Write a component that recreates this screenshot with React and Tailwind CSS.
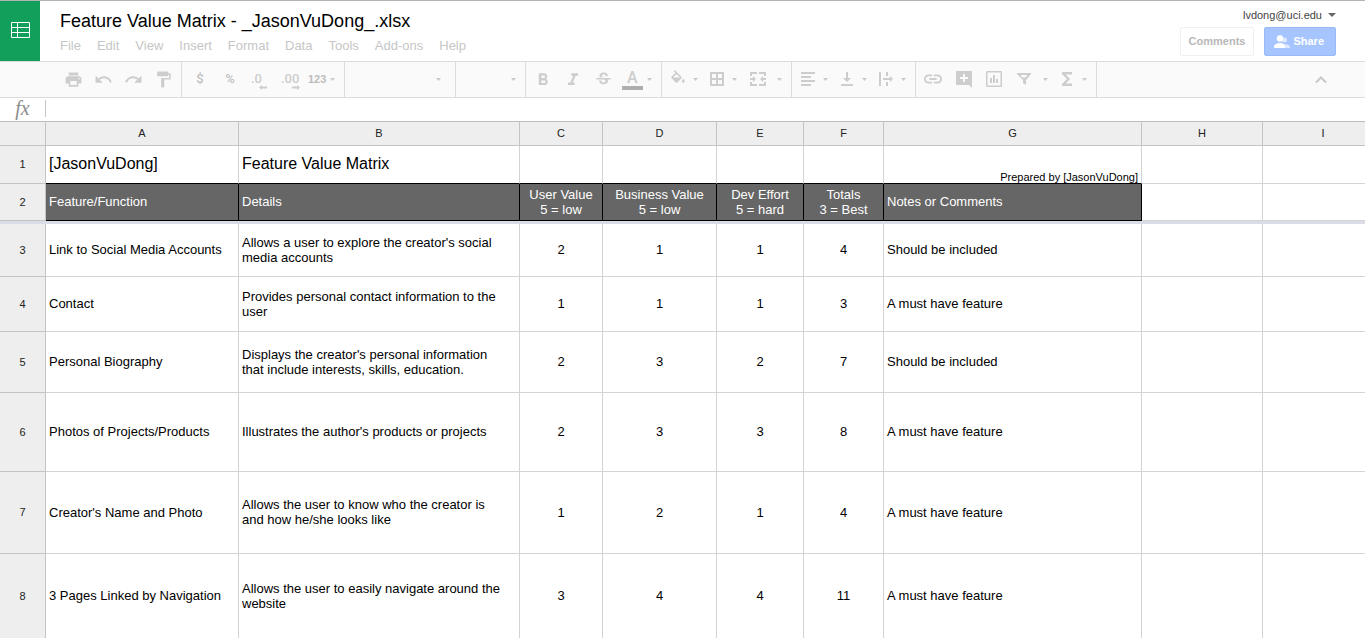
import React from "react";
import {
  MdPrint,
  MdUndo,
  MdRedo,
  MdFormatPaint,
  MdFormatBold,
  MdFormatItalic,
  MdStrikethroughS,
} from "react-icons/md";

const MENUS = ["File", "Edit", "View", "Insert", "Format", "Data", "Tools", "Add-ons", "Help"];

const COLUMNS = [
  { name: "A", width: "w-[193px]" },
  { name: "B", width: "w-[281px]" },
  { name: "C", width: "w-[83px]" },
  { name: "D", width: "w-[114px]" },
  { name: "E", width: "w-[87px]" },
  { name: "F", width: "w-[80px]" },
  { name: "G", width: "w-[258px]" },
  { name: "H", width: "w-[121px]" },
  { name: "I", width: "w-[121px]" },
];

const HEADINGS = [
  ["Feature/Function"],
  ["Details"],
  ["User Value", "5 = low"],
  ["Business Value", "5 = low"],
  ["Dev Effort", "5 = hard"],
  ["Totals", "3 = Best"],
  ["Notes or Comments"],
];

const ROWS = [
  {
    height: "h-[53px]",
    cells: ["Link to Social Media Accounts", "Allows a user to explore the creator's social media accounts", 2, 1, 1, 4, "Should be included"],
  },
  {
    height: "h-[55px]",
    cells: ["Contact", "Provides personal contact information to the user", 1, 1, 1, 3, "A must have feature"],
  },
  {
    height: "h-[61px]",
    cells: ["Personal Biography", "Displays the creator's personal information that include interests, skills, education.", 2, 3, 2, 7, "Should be included"],
  },
  {
    height: "h-[79px]",
    cells: ["Photos of Projects/Products", "Illustrates the author's products or projects", 2, 3, 3, 8, "A must have feature"],
  },
  {
    height: "h-[82px]",
    cells: ["Creator's Name and Photo", "Allows the user to know who the creator is and how he/she looks like", 1, 2, 1, 4, "A must have feature"],
  },
  {
    height: "h-[85px]",
    cells: ["3 Pages Linked by Navigation", "Allows the user to easily navigate around the website", 3, 4, 4, 11, "A must have feature"],
  },
];

function Glyph({ d, viewBox = "0 0 18 18" }) {
  return (
    <svg width="18" height="18" viewBox={viewBox} fill="currentColor" fillRule="evenodd" aria-hidden="true">
      <path d={d} />
    </svg>
  );
}

const SHAPES = {
  fill: "M16.56 8.94L7.62 0 6.21 1.41l2.38 2.38-5.15 5.15c-.59.59-.59 1.54 0 2.12l5.5 5.5c.29.29.68.44 1.06.44s.77-.15 1.06-.44l5.5-5.5c.59-.58.59-1.53 0-2.12zM5.21 10L10 5.21 14.79 10H5.21zM19 11.5s-2 2.17-2 3.5c0 1.1.9 2 2 2s2-.9 2-2c0-1.33-2-3.5-2-3.5z",
  borders: "M2 2h14v14H2zM4 4v4h4V4zM10 4v4h4V4zM4 10v4h4v-4zM10 10v4h4v-4z",
  merge:
    "M1 2h7v2H3v2H1zM10 2h7v4h-2V4h-5zM1 12h2v2h5v2H1zM15 12h2v4h-7v-2h5zM1 8h3V6l3 3-3 3v-2H1zM17 8h-3V6l-3 3 3 3v-2h3z",
  align: "M2 2h14v2H2zM2 6h10v2H2zM2 10h14v2H2zM2 14h10v2H2z",
  bottom: "M3 14h12v2H3zM8 2h2v6h3l-4 4-4-4h3z",
  wrap: "M2 2h2v14H2zM9 2h2v4H9zM9 12h2v4H9zM6 8h7V6l3 3-3 3v-2H6z",
  link: "M3.9 12c0-1.71 1.39-3.1 3.1-3.1h4V7H7c-2.76 0-5 2.24-5 5s2.24 5 5 5h4v-1.9H7c-1.71 0-3.1-1.39-3.1-3.1zM8 13h8v-2H8v2zm9-6h-4v1.900h4c1.71 0 3.1 1.39 3.1 3.1s-1.39 3.1-3.1 3.1h-4V17h4c2.76 0 5-2.24 5-5s-2.240-5-5-5z",
  comment: "M3 1h14a1 1 0 0 1 1 1v16l-3-3H3a1 1 0 0 1-1-1V2a1 1 0 0 1 1-1zM9 4v3H6v2h3v3h2V9h3V7h-3V4z",
  chart: "M3 1h14a1 1 0 0 1 1 1v14a1 1 0 0 1-1 1H3a1 1 0 0 1-1-1V2a1 1 0 0 1 1-1zM3.500 2.500v13h13v-13zM6 8h2v5H6zM9 5h2v8H9zM12 9h2v4h-2z",
  filter: "M2 3h14v1l-5 6v5l-3-2v-3L2 4zM5.500 5l2 2.500h3l2-2.500z",
  sum: "M14 2H4v2l5 5-5 5v2h10v-2.500H7.800L12 9 7.800 4.500H14z",
};

function Caret() {
  return (
    <svg width="5" height="3" viewBox="0 0 5 3" fill="#cacaca" className="mt-2" aria-hidden="true">
      <path d="M0 0h5L2.500 3z" />
    </svg>
  );
}

function Group({ label, className = "", children }) {
  return (
    <div role="group" aria-label={label} className={`flex h-full shrink-0 border-r border-[#dcdcdc] ${className}`}>
      {children}
    </div>
  );
}

function Tool({ label, children }) {
  return (
    <button type="button" aria-label={label} className="flex h-full w-[30px] justify-center pt-2">
      {children}
    </button>
  );
}

function DropTool({ label, wide = false, children }) {
  return (
    <button
      type="button"
      aria-label={label}
      aria-haspopup="menu"
      className={wide ? "flex h-full gap-[10px] pt-2 pr-[5px] pl-[7px]" : "flex h-full gap-[6px] pt-2 pr-[5px] pl-[5px]"}
    >
      {children}
      <Caret />
    </button>
  );
}

function Decimal({ text, right = false }) {
  return (
    <span className="flex w-[18px] flex-col pt-[3px] font-[Roboto] text-[13px] leading-3 font-medium">
      <span className="text-left">{text}</span>
      <svg
        width="8"
        height="5"
        viewBox="0 0 8 5"
        fill="currentColor"
        className={right ? "ml-[11px]" : "ml-2"}
        aria-hidden="true"
      >
        <path d={right ? "M0 1.500h5V0l3 2.500L5 5V3.500H0z" : "M8 1.500H3V0L0 2.500 3 5V3.500h5z"} />
      </svg>
    </span>
  );
}

function Header() {
  return (
    <header className="flex h-[61px] border-t border-[#b3b3b3]">
      <a href="#sheets" aria-label="Sheets home" className="flex w-10 shrink-0 items-start justify-center bg-[#129e5b] pt-[21px]">
        <svg width="20" height="17" viewBox="0 0 20 17" fill="none" stroke="#fff" aria-hidden="true">
          <path d="M1.500.5h18v15h-18zM7.500.5v15M1.500 5.500h18M1.500 10.500h18" />
        </svg>
      </a>
      <div className="flex flex-1 flex-col pl-5">
        <h1 className="pt-2 text-lg leading-6 whitespace-nowrap text-black">Feature Value Matrix - _JasonVuDong_.xlsx</h1>
        <nav aria-label="Main menu" className="flex gap-4 pt-[5px] text-[13px] leading-4 text-[#c6c6c6]">
          {MENUS.map((menu) => (
            <button key={menu} type="button">
              {menu}
            </button>
          ))}
        </nav>
      </div>
      <div className="flex flex-col items-end pt-2 pr-[29px]">
        <button type="button" className="flex items-center gap-[6px] text-[11px] leading-3 text-[#444]">
          lvdong@uci.edu
          <svg width="8" height="4" viewBox="0 0 8 4" fill="#666" aria-hidden="true">
            <path d="M0 0h8L4 4z" />
          </svg>
        </button>
        <div className="mt-[6px] flex gap-[10px] text-[11px] font-bold">
          <button type="button" className="h-[29px] rounded-xs border border-[#f0f0f0] px-2 text-[#b8b8b8]">
            Comments
          </button>
          <button
            type="button"
            className="flex h-[29px] items-center gap-[2px] rounded-xs border border-[#98baf8] bg-[#a6c5ff] pr-[11px] pl-2 text-white"
          >
            <svg width="18" height="14" viewBox="0 0 18 14" fill="#fff" aria-hidden="true">
              <circle cx="11.500" cy="5" r="2.500" opacity=".6" />
              <path d="M11 9c4 0 6 1.500 6 3v1h-5v-1c0-1.300-.5-2.200-1-3z" opacity=".6" />
              <circle cx="7" cy="3.500" r="3.200" />
              <path d="M1 13v-1.500C1 9.300 4.500 8 7 8s5 1.300 5 3.500V13z" />
            </svg>
            Share
          </button>
        </div>
      </div>
    </header>
  );
}

function Toolbar() {
  return (
    <div role="toolbar" aria-label="Formatting" className="flex h-[37px] border-y border-[#dcdcdc] bg-[#fafafa] text-[#cdcdcd]">
      <Group label="Edit" className="pr-[3px] pl-[58px]">
        <Tool label="Print"><MdPrint size={19} /></Tool>
        <Tool label="Undo"><MdUndo size={19} /></Tool>
        <Tool label="Redo"><MdRedo size={19} /></Tool>
        <Tool label="Paint format"><MdFormatPaint size={19} /></Tool>
      </Group>
      <Group label="Number format" className="px-[3px]">
        <Tool label="Format as currency"><span className="font-[Roboto] text-[13px] leading-[18px] font-medium text-[#c0c0c0]">$</span></Tool>
        <Tool label="Format as percent"><span className="font-[Roboto] text-[13px] leading-[18px] font-medium text-[#c0c0c0]">%</span></Tool>
        <Tool label="Decrease decimal places"><Decimal text=".0" /></Tool>
        <Tool label="Increase decimal places"><Decimal text=".00" right /></Tool>
        <button type="button" aria-haspopup="menu" className="flex h-full gap-1 pt-2 pr-[6px] pl-[3px] text-[11px] leading-[18px] font-bold text-[#bdbdbd]">
          123
          <Caret />
        </button>
      </Group>
      <Group label="Font">
        <button type="button" aria-label="Font family" aria-haspopup="listbox" className="flex h-full w-[110px] justify-end pt-2 pr-[14px]">
          <Caret />
        </button>
      </Group>
      <Group label="Font size">
        <button type="button" aria-label="Font size" aria-haspopup="listbox" className="flex h-full w-[69px] justify-end pt-2 pr-[9px]">
          <Caret />
        </button>
      </Group>
      <Group label="Text style" className="pr-1 pl-[2px]">
        <Tool label="Bold"><MdFormatBold size={20} /></Tool>
        <Tool label="Italic"><MdFormatItalic size={20} /></Tool>
        <Tool label="Strikethrough"><MdStrikethroughS size={19} /></Tool>
        <DropTool label="Text color">
          <span className="flex w-[18px] flex-col items-center font-[Roboto] text-base leading-4 font-medium">
            A
            <span className="h-1 w-[21px] bg-[#aeaeae]" />
          </span>
        </DropTool>
      </Group>
      <Group label="Cell style" className="pr-1 pl-[2px]">
        <DropTool label="Fill color"><Glyph d={SHAPES.fill} viewBox="0 0 24 24" /></DropTool>
        <DropTool label="Borders"><Glyph d={SHAPES.borders} /></DropTool>
        <DropTool label="Merge cells" wide><Glyph d={SHAPES.merge} /></DropTool>
      </Group>
      <Group label="Alignment" className="pr-1 pl-[2px]">
        <DropTool label="Horizontal align"><Glyph d={SHAPES.align} /></DropTool>
        <DropTool label="Vertical align"><Glyph d={SHAPES.bottom} /></DropTool>
        <DropTool label="Text wrapping"><Glyph d={SHAPES.wrap} /></DropTool>
      </Group>
      <Group label="Insert" className="pr-1 pl-[2px]">
        <Tool label="Insert link"><Glyph d={SHAPES.link} viewBox="2 2 20 20" /></Tool>
        <Tool label="Insert comment"><Glyph d={SHAPES.comment} /></Tool>
        <Tool label="Insert chart"><Glyph d={SHAPES.chart} /></Tool>
        <DropTool label="Filter" wide><Glyph d={SHAPES.filter} /></DropTool>
        <DropTool label="Functions"><Glyph d={SHAPES.sum} /></DropTool>
      </Group>
      <button type="button" aria-label="Hide the menus" className="ml-auto flex h-full items-center px-[38px]">
        <svg width="12" height="8" viewBox="0 0 12 8" fill="none" stroke="#c8c8c8" strokeWidth="2" aria-hidden="true">
          <path d="M1 6.500l5-5 5 5" />
        </svg>
      </button>
    </div>
  );
}

function Sheet() {
  const head = "h-6 border-r border-b border-[#c4c4c4] bg-[#eee] p-0 text-[11px] font-normal text-[#222]";
  const rowHead = "border-r border-b border-[#c4c4c4] bg-[#eee] p-0 text-center text-[11px] font-normal text-[#222]";
  const grid = "border-r border-b border-[#d3d3d3]";
  const titleCell = "border-r border-b border-r-[#d3d3d3] border-b-black";
  return (
    <main className="flex-1 overflow-hidden border-t border-[#bdbdbd]">
      <table className="w-max table-fixed border-separate border-spacing-0 text-[13px] leading-[15px] text-black">
        <thead>
          <tr>
            <th className={`${head} w-[46px]`} aria-label="Select all" />
            {COLUMNS.map((c) => (
              <th key={c.name} scope="col" className={`${head} ${c.width}`}>
                {c.name}
              </th>
            ))}
          </tr>
        </thead>
        <tbody>
          <tr className="h-[38px]">
            <th scope="row" className={rowHead}>1</th>
            <td className={`${titleCell} px-[3px] pb-px text-base leading-5`}>[JasonVuDong]</td>
            <td className={`${titleCell} px-[3px] pb-px text-base leading-5`}>Feature Value Matrix</td>
            {["C", "D", "E", "F"].map((c) => (
              <td key={c} className={titleCell} />
            ))}
            <td className={`${titleCell} px-[3px] text-right align-bottom text-[11px] leading-3`}>Prepared by [JasonVuDong]</td>
            <td className={grid} />
            <td className={grid} />
          </tr>
          <tr className="h-[37px]">
            <th scope="row" className={rowHead}>2</th>
            {HEADINGS.map((lines, i) => (
              <td
                key={i}
                className={`border-r border-b border-black bg-[#666] pb-px text-white ${lines.length > 1 ? "text-center" : "px-[3px]"}`}
              >
                {lines.map((line) => (
                  <div key={line}>{line}</div>
                ))}
              </td>
            ))}
            <td className={grid} />
            <td className={grid} />
          </tr>
          <tr aria-hidden="true">
            <td colSpan={10} className="h-[3px] bg-[#dadde6] p-0" />
          </tr>
          {ROWS.map((row, r) => (
            <tr key={r} className={row.height}>
              <th scope="row" className={rowHead}>{r + 3}</th>
              {row.cells.map((value, i) => (
                <td
                  key={i}
                  className={`${grid} pt-0 pb-px pl-[3px] ${i === 1 ? "pr-4" : "pr-[3px]"} ${typeof value === "number" ? "text-center" : ""}`}
                >
                  {value}
                </td>
              ))}
              <td className={grid} />
              <td className={grid} />
            </tr>
          ))}
        </tbody>
      </table>
    </main>
  );
}

export default function App() {
  return (
    <div className="flex h-screen flex-col overflow-hidden bg-white font-['Liberation_Sans',Arial,sans-serif]">
      <Header />
      <Toolbar />
      <div className="flex h-[23px] items-start pt-[2px]">
        <label htmlFor="formula" className="w-[45px] text-center font-['Liberation_Serif',serif] text-xl leading-4 text-[#8c8c8c] italic">
          fx
        </label>
        <input id="formula" type="text" className="h-[17px] flex-1 border-l border-[#c4c4c4] px-2 text-[13px] outline-none" />
      </div>
      <Sheet />
    </div>
  );
}
